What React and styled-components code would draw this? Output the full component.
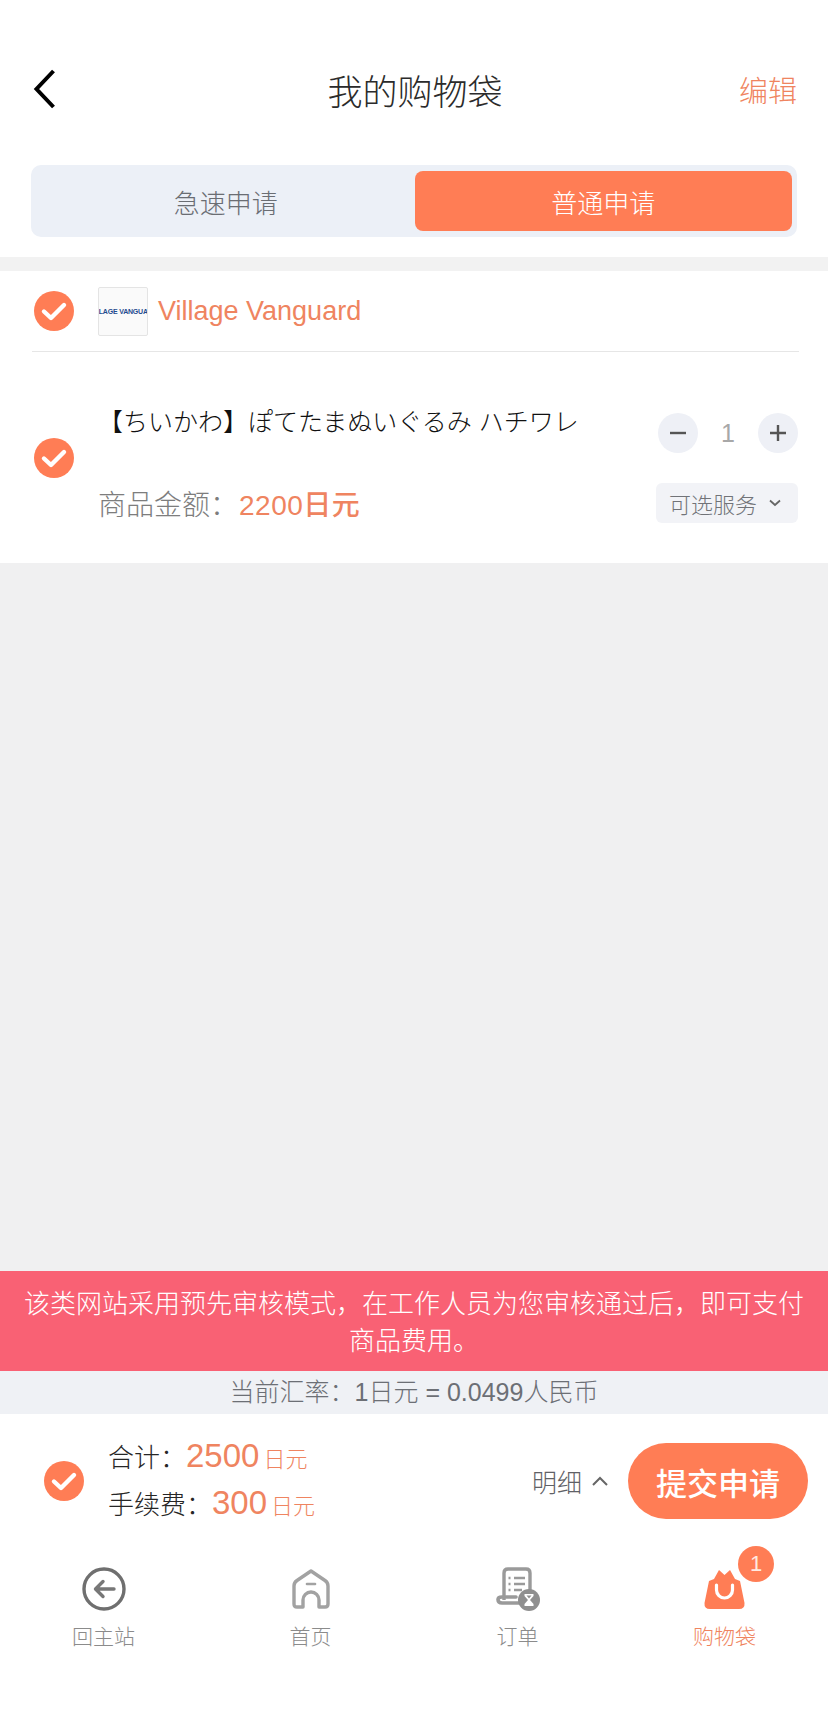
import React from 'react';
import styled, { createGlobalStyle } from 'styled-components';

const ORANGE = '#ff7d55';
const PRICE = '#ef8460';

const Global = createGlobalStyle`
  html, body { margin: 0; padding: 0; background: #fff; }
  body { font-family: "Liberation Sans", "Noto Sans CJK SC", sans-serif; font-weight: 300; }
  * { box-sizing: border-box; }
`;

const Page = styled.div`
  width: 828px;
  height: 1729px;
  display: flex;
  flex-direction: column;
  background: #fff;
  overflow: hidden;
`;

const Header = styled.header`
  display: grid;
  grid-template-columns: 1fr auto 1fr;
  align-items: center;
  height: 78px;
  margin-top: 50px;
  padding: 0 31px 0 33px;
`;

const BackButton = styled.div`
  display: flex;
  align-items: center;
`;

const Title = styled.h1`
  margin: 0;
  font-size: 35px;
  font-weight: 300;
  color: #2b2b2b;
`;

const EditLink = styled.a`
  justify-self: end;
  font-size: 29px;
  color: ${PRICE};
`;

const Segment = styled.div`
  display: flex;
  height: 72px;
  margin: 37px 31px 20px;
  padding: 6px 5px 6px 6px;
  border-radius: 10px;
  background: #ecf0f7;
`;

const SegmentTab = styled.div`
  flex: 1;
  display: flex;
  align-items: center;
  justify-content: center;
  border-radius: 8px;
  font-size: 26px;
  color: ${(p) => (p.$active ? '#fff' : '#6a6d73')};
  background: ${(p) => (p.$active ? ORANGE : 'transparent')};
`;

const Band = styled.div`
  height: 14px;
  background: #f2f2f2;
`;

const ShopRow = styled.div`
  display: flex;
  align-items: center;
  height: 81px;
  margin: 0 29px 0 32px;
  padding-left: 2px;
  border-bottom: 1px solid #e6e6e6;
`;

const CheckMark = styled.svg`
  flex: none;
  width: 40px;
  height: 40px;
`;

const ShopLogo = styled.div`
  flex: none;
  display: flex;
  align-items: center;
  justify-content: center;
  width: 50px;
  height: 49px;
  margin: 0 10px 0 24px;
  border: 1px solid #e4e4e4;
  border-radius: 2px;
  background: #fafafa;
  overflow: hidden;
  font-size: 7px;
  font-weight: 700;
  font-family: "Liberation Sans Narrow", "Liberation Sans", sans-serif;
  letter-spacing: -0.2px;
  white-space: nowrap;
  color: #1f4b8f;
`;

const ShopName = styled.span`
  font-size: 27px;
  color: ${PRICE};
`;

const Item = styled.section`
  display: flex;
  align-items: center;
  height: 211px;
  padding: 0 30px 0 34px;
`;

const ItemBody = styled.div`
  flex: 1;
  display: flex;
  flex-direction: column;
  align-self: flex-start;
  margin-left: 24px;
  padding-top: 52px;
`;

const ItemLine = styled.div`
  display: flex;
  justify-content: space-between;
  align-items: ${(p) => (p.$center ? 'center' : 'flex-start')};
  margin-top: ${(p) => p.$gap || 0}px;
`;

const ItemName = styled.div`
  font-family: "Liberation Sans", "Noto Sans CJK JP", sans-serif;
  font-size: 25px;
  line-height: 36px;
  white-space: nowrap;
  color: #111;
`;

const Stepper = styled.div`
  display: flex;
  align-items: center;
  justify-content: space-between;
  width: 140px;
  margin-top: 9px;
`;

const StepButton = styled.div`
  display: flex;
  align-items: center;
  justify-content: center;
  width: 40px;
  height: 40px;
  border-radius: 50%;
  background: #eef0f6;
`;

const StepCount = styled.span`
  font-size: 25px;
  color: #a8a8a8;
`;

const PriceLine = styled.div`
  font-size: 28px;
  color: #7d7d7d;
`;

const ItemPrice = styled.span`
  margin-left: 1px;
  font-weight: 500;
  color: ${PRICE};
  letter-spacing: 0.5px;
`;

const ServicePill = styled.div`
  display: flex;
  align-items: center;
  width: 142px;
  height: 40px;
  padding-left: 13px;
  border-radius: 6px;
  background: #f2f3f7;
  font-size: 22px;
  color: #717378;
`;

const Spacer = styled.div`
  flex: 1;
  background: #f0f0f1;
`;

const Notice = styled.div`
  height: 100px;
  padding: 15px 24px 0;
  background: #f96174;
  font-size: 26px;
  line-height: 37px;
  text-align: center;
  color: #fff;
`;

const RateBar = styled.div`
  height: 43px;
  font-size: 25px;
  line-height: 43px;
  text-align: center;
  background: #eff1f5;
  color: #6c6f75;
`;

const Summary = styled.div`
  display: flex;
  align-items: center;
  height: 134px;
  padding: 0 20px 0 44px;
`;

const Totals = styled.div`
  margin-left: 24px;
  font-size: 26px;
  line-height: 43px;
  color: #262626;
`;

const Amount = styled.span`
  font-size: 33px;
  color: ${PRICE};
`;

const Unit = styled.span`
  margin-left: 4px;
  font-size: 22px;
  color: ${PRICE};
`;

const DetailToggle = styled.div`
  display: flex;
  align-items: center;
  gap: 10px;
  margin-left: auto;
  font-size: 25px;
  color: #5f6166;
`;

const SubmitButton = styled.button`
  width: 180px;
  height: 76px;
  margin-left: 20px;
  border: 0;
  border-radius: 38px;
  background: ${ORANGE};
  font-family: inherit;
  font-size: 31px;
  font-weight: 500;
  color: #fff;
`;

const TabBar = styled.nav`
  display: grid;
  grid-template-columns: repeat(4, 207px);
  flex: none;
  height: 181px;
  padding-top: 19px;
`;

const TabItem = styled.div`
  display: flex;
  flex-direction: column;
  align-items: center;
`;

const TabIcon = styled.div`
  position: relative;
  display: flex;
  align-items: center;
  justify-content: center;
  height: 44px;
`;

const TabLabel = styled.span`
  margin-top: 11px;
  font-size: 21px;
  line-height: 30px;
  color: ${(p) => (p.$active ? PRICE : '#8b8b8b')};
`;

const Badge = styled.span`
  position: absolute;
  top: -21px;
  left: 34px;
  display: flex;
  align-items: center;
  justify-content: center;
  width: 36px;
  height: 36px;
  border-radius: 50%;
  background: ${ORANGE};
  font-size: 22px;
  color: #ffe9e1;
`;

function Check() {
  return (
    <CheckMark viewBox="0 0 40 40">
      <circle cx="20" cy="20" r="20" fill={ORANGE} />
      <path d="M10 20.5 L17 27 L30 14" fill="none" stroke="#fff" strokeWidth="4.4" strokeLinecap="round" strokeLinejoin="round" />
    </CheckMark>
  );
}

const tabs = [
  {
    label: '回主站',
    icon: (
      <svg width="44" height="44" viewBox="0 0 44 44" fill="none">
        <circle cx="22" cy="22" r="20" stroke="#6f6f6f" strokeWidth="3.4" />
        <path d="M32 22 H14 M21 14.5 L13.5 22 L21 29.5" stroke="#777" strokeWidth="3.4" strokeLinecap="round" strokeLinejoin="round" />
      </svg>
    ),
  },
  {
    label: '首页',
    icon: (
      <svg width="38" height="40" viewBox="0 0 38 40" fill="none" stroke="#a2a2a2" strokeWidth="3.4" strokeLinecap="round" strokeLinejoin="round">
        <path d="M19 2 L33 11.5 Q36 13.5 36 17 V35 Q36 38 33 38 H27 V31 A8 8 0 0 0 11 31 V38 H5 Q2 38 2 35 V17 Q2 13.5 5 11.5 Z" />
        <path d="M15 15 H23" strokeWidth="2.6" />
      </svg>
    ),
  },
  {
    label: '订单',
    icon: (
      <svg width="44" height="44" viewBox="0 0 44 44" fill="none">
        <path d="M8 33 V6 Q8 2 12 2 H30 Q34 2 34 6 V24" stroke="#9a9a9a" strokeWidth="3.4" />
        <path d="M24 36 H6 Q2 36 2 32.5 Q2 30 6 30 H20" stroke="#9a9a9a" strokeWidth="3.6" strokeLinecap="round" />
        <path d="M18 11 H29 M18 17 H29 M18 23 H26" stroke="#9a9a9a" strokeWidth="2.4" />
        <path d="M12.5 11 H14.5 M12.5 17 H14.5 M12.5 23 H14.5" stroke="#9a9a9a" strokeWidth="2.4" />
        <circle cx="33" cy="33" r="11" fill="#8f8f8f" />
        <path d="M28.5 27 H37.5 V29 L34 33 L37.5 37 V39 H28.5 V37 L32 33 L28.5 29 Z" fill="#fff" />
        <path d="M30.5 28.5 H35.5 L33 31.5 Z" fill="#8f8f8f" />
      </svg>
    ),
  },
  {
    label: '购物袋',
    active: true,
    icon: (
      <svg width="41" height="40" viewBox="0 0 41 40">
        <path d="M5 12 L10 10 L15 1 L20.5 6 L26 1 L31 10 L36 12 L40.5 34 Q41 40 35 40 H6 Q0 40 0.5 34 Z" fill={ORANGE} />
        <path d="M12.5 16 V21 A8 8 0 0 0 28.5 21 V16" fill="none" stroke="#fff" strokeWidth="3.2" strokeLinecap="round" />
      </svg>
    ),
    badge: 1,
  },
];

export default function App() {
  return (
    <Page>
      <Global />
      <Header>
        <BackButton>
          <svg width="23" height="40" viewBox="0 0 23 40" fill="none">
            <path d="M20.5 2 L3.5 20 L20.5 38" stroke="#000" strokeWidth="4" />
          </svg>
        </BackButton>
        <Title>我的购物袋</Title>
        <EditLink>编辑</EditLink>
      </Header>

      <Segment>
        <SegmentTab>急速申请</SegmentTab>
        <SegmentTab $active>普通申请</SegmentTab>
      </Segment>
      <Band />

      <ShopRow>
        <Check />
        <ShopLogo>VILLAGE VANGUARD</ShopLogo>
        <ShopName>Village Vanguard</ShopName>
      </ShopRow>

      <Item>
        <Check />
        <ItemBody>
          <ItemLine>
            <ItemName>【ちいかわ】ぽてたまぬいぐるみ ハチワレ</ItemName>
            <Stepper>
              <StepButton>
                <svg width="18" height="18" viewBox="0 0 18 18"><path d="M1 9 H17" stroke="#555" strokeWidth="2.4" /></svg>
              </StepButton>
              <StepCount>1</StepCount>
              <StepButton>
                <svg width="18" height="18" viewBox="0 0 18 18"><path d="M1 9 H17 M9 1 V17" stroke="#555" strokeWidth="2.4" /></svg>
              </StepButton>
            </Stepper>
          </ItemLine>
          <ItemLine $center $gap={30}>
            <PriceLine>商品金额：<ItemPrice>2200日元</ItemPrice></PriceLine>
            <ServicePill>
              可选服务
              <svg width="12" height="8" viewBox="0 0 12 8" fill="none" style={{ marginLeft: 12 }}>
                <path d="M1 1.5 L6 6 L11 1.5" stroke="#666" strokeWidth="1.8" />
              </svg>
            </ServicePill>
          </ItemLine>
        </ItemBody>
      </Item>

      <Spacer />

      <Notice>该类网站采用预先审核模式，在工作人员为您审核通过后，即可支付商品费用。</Notice>
      <RateBar>当前汇率：1日元 = 0.0499人民币</RateBar>

      <Summary>
        <Check />
        <Totals>
          <div>合计：<Amount>2500</Amount><Unit>日元</Unit></div>
          <div>手续费：<Amount>300</Amount><Unit>日元</Unit></div>
        </Totals>
        <DetailToggle>
          明细
          <svg width="16" height="10" viewBox="0 0 16 10" fill="none">
            <path d="M1 9 L8 2 L15 9" stroke="#666" strokeWidth="2" />
          </svg>
        </DetailToggle>
        <SubmitButton>提交申请</SubmitButton>
      </Summary>

      <TabBar>
        {tabs.map((tab) => (
          <TabItem key={tab.label}>
            <TabIcon>
              {tab.icon}
              {tab.badge && <Badge>{tab.badge}</Badge>}
            </TabIcon>
            <TabLabel $active={tab.active}>{tab.label}</TabLabel>
          </TabItem>
        ))}
      </TabBar>
    </Page>
  );
}
